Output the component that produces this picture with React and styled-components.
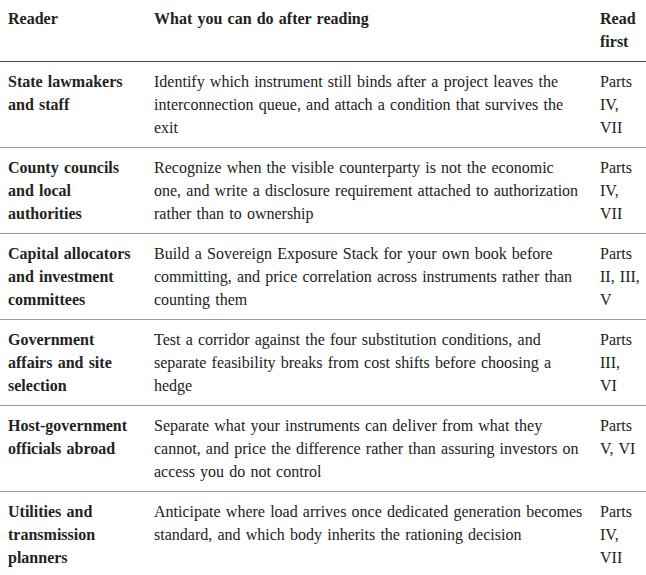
import React from "react"
import styled, { createGlobalStyle } from "styled-components"

const GlobalStyle = createGlobalStyle`
  html, body {
    margin: 0;
    padding: 0;
    background: #ffffff;
  }
`

const rows = [
  {
    reader: "State lawmakers and staff",
    action:
      "Identify which instrument still binds after a project leaves the interconnection queue, and attach a condition that survives the exit",
    parts: "Parts IV, VII",
  },
  {
    reader: "County councils and local authorities",
    action:
      "Recognize when the visible counterparty is not the economic one, and write a disclosure requirement attached to authorization rather than to ownership",
    parts: "Parts IV, VII",
  },
  {
    reader: "Capital allocators and investment committees",
    action:
      "Build a Sovereign Exposure Stack for your own book before committing, and price correlation across instruments rather than counting them",
    parts: "Parts II, III, V",
  },
  {
    reader: "Government affairs and site selection",
    action:
      "Test a corridor against the four substitution conditions, and separate feasibility breaks from cost shifts before choosing a hedge",
    parts: "Parts III, VI",
  },
  {
    reader: "Host-government officials abroad",
    action:
      "Separate what your instruments can deliver from what they cannot, and price the difference rather than assuring investors on access you do not control",
    parts: "Parts V, VI",
  },
  {
    reader: "Utilities and transmission planners",
    action:
      "Anticipate where load arrives once dedicated generation becomes standard, and which body inherits the rationing decision",
    parts: "Parts IV, VII",
  },
]

const Table = styled.table`
  width: 646px;
  border-collapse: collapse;
  table-layout: fixed;
  font-family: "Liberation Serif", "Times New Roman", serif;
  font-size: 16px;
  line-height: 23px;
  word-spacing: 1.2px;
  color: #222222;
`

const Col = styled.col`
  width: ${({ w }) => (w ? `${w}px` : "auto")};
`

const HeadCell = styled.th`
  text-align: left;
  vertical-align: top;
  font-weight: 700;
  padding: 7px ${({ narrow }) => (narrow ? 5 : 8)}px 8px 8px;
  border-bottom: 1px solid #444444;
`

const Row = styled.tr`
  & + & td {
    border-top: 1px solid #9a9a9a;
  }
`

const Cell = styled.td`
  vertical-align: top;
  padding: 8px ${({ narrow }) => (narrow ? 5 : 8)}px 8px 8px;
  font-weight: ${({ bold }) => (bold ? 700 : 400)};
`

const App = () => (
  <>
    <GlobalStyle />
    <Table>
      <colgroup>
        <Col w={146} />
        <Col />
        <Col w={54} />
      </colgroup>
      <thead>
        <tr>
          <HeadCell>Reader</HeadCell>
          <HeadCell>What you can do after reading</HeadCell>
          <HeadCell narrow>Read first</HeadCell>
        </tr>
      </thead>
      <tbody>
        {rows.map(row => (
          <Row key={row.reader}>
            <Cell bold>{row.reader}</Cell>
            <Cell>{row.action}</Cell>
            <Cell narrow>{row.parts}</Cell>
          </Row>
        ))}
      </tbody>
    </Table>
  </>
)

export default App
